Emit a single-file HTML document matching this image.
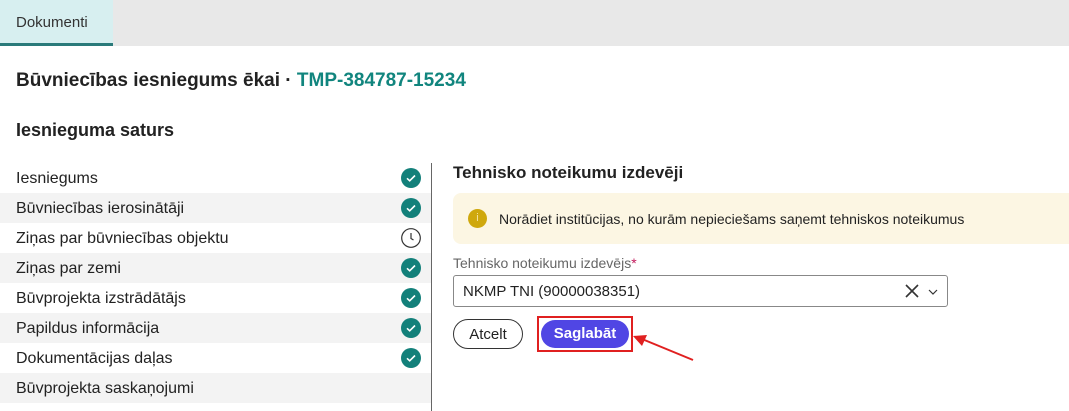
<!DOCTYPE html>
<html><head><meta charset="utf-8"><style>
*{margin:0;padding:0;box-sizing:border-box}
html,body{width:1069px;height:411px;overflow:hidden}
body{background:#fff;font-family:"Liberation Sans",sans-serif;color:#222;position:relative}
.top{position:absolute;left:0;top:0;width:1069px;height:46px;background:#e8e8e8}
.tab{position:absolute;left:0;top:0;width:113px;height:46px;background:#d7eff0;border-bottom:3px solid #2a7a7a;font-size:15px;line-height:46px;padding-left:16px;color:#333}
.h1{position:absolute;left:16px;top:70px;font-size:19px;font-weight:bold;color:#222}
.h1 span{color:#11857e}
.h2{position:absolute;left:16px;top:120px;font-size:18px;font-weight:bold}
.row{position:absolute;left:0;width:432px;height:30px;font-size:16px;line-height:31px;padding-left:16px;color:#222}
.g{background:#f3f3f3}
.ic{position:absolute;left:401px;top:5px;width:20px;height:20px}
.div{position:absolute;left:431px;top:163px;width:1px;height:248px;background:#666}
</style></head><body>
<div class="top"></div><div class="tab">Dokumenti</div>
<div class="h1">Būvniecības iesniegums ēkai · <span>TMP-384787-15234</span></div>
<div class="h2">Iesnieguma saturs</div>
<div class="row" style="top:163px">Iesniegums<svg class="ic" viewBox="0 0 20 20"><circle cx="10" cy="10" r="10" fill="#13807a"/><path d="M6 10.3l2.7 2.5 5.3-5.3" stroke="#fff" stroke-width="1.6" fill="none"/></svg></div>
<div class="row g" style="top:193px">Būvniecības ierosinātāji<svg class="ic" viewBox="0 0 20 20"><circle cx="10" cy="10" r="10" fill="#13807a"/><path d="M6 10.3l2.7 2.5 5.3-5.3" stroke="#fff" stroke-width="1.6" fill="none"/></svg></div>
<div class="row" style="top:223px">Ziņas par būvniecības objektu<svg class="ic" viewBox="0 0 20 20"><circle cx="10" cy="10" r="9.3" fill="#fff" stroke="#333" stroke-width="1.2"/><path d="M10 5v5.5l2.5 1.5" stroke="#333" stroke-width="1.2" fill="none"/></svg></div>
<div class="row g" style="top:253px">Ziņas par zemi<svg class="ic" viewBox="0 0 20 20"><circle cx="10" cy="10" r="10" fill="#13807a"/><path d="M6 10.3l2.7 2.5 5.3-5.3" stroke="#fff" stroke-width="1.6" fill="none"/></svg></div>
<div class="row" style="top:283px">Būvprojekta izstrādātājs<svg class="ic" viewBox="0 0 20 20"><circle cx="10" cy="10" r="10" fill="#13807a"/><path d="M6 10.3l2.7 2.5 5.3-5.3" stroke="#fff" stroke-width="1.6" fill="none"/></svg></div>
<div class="row g" style="top:313px">Papildus informācija<svg class="ic" viewBox="0 0 20 20"><circle cx="10" cy="10" r="10" fill="#13807a"/><path d="M6 10.3l2.7 2.5 5.3-5.3" stroke="#fff" stroke-width="1.6" fill="none"/></svg></div>
<div class="row" style="top:343px">Dokumentācijas daļas<svg class="ic" viewBox="0 0 20 20"><circle cx="10" cy="10" r="10" fill="#13807a"/><path d="M6 10.3l2.7 2.5 5.3-5.3" stroke="#fff" stroke-width="1.6" fill="none"/></svg></div>
<div class="row g" style="top:373px">Būvprojekta saskaņojumi</div>
<div class="row" style="top:403px">Būvprojekta vadība</div>
<div class="div"></div>
<div style="position:absolute;left:453px;top:163px;font-size:17px;font-weight:bold">Tehnisko noteikumu izdevēji</div>
<div style="position:absolute;left:453px;top:193px;width:630px;height:51px;background:#fcf6e3;border-radius:8px"></div>
<div style="position:absolute;left:468px;top:209px;width:19px;height:19px;border-radius:50%;background:#cfa80d;color:#f3e2a0;font-size:11px;text-align:center;line-height:19px">i</div>
<div style="position:absolute;left:499px;top:211px;font-size:14px;color:#222">Norādiet institūcijas, no kurām nepieciešams saņemt tehniskos noteikumus</div>
<div style="position:absolute;left:453px;top:255px;font-size:14px;color:#666">Tehnisko noteikumu izdevējs<span style="color:#c2185b">*</span></div>
<div style="position:absolute;left:453px;top:275px;width:495px;height:32px;border:1px solid #888;border-radius:3px;font-size:15px;line-height:31px;padding-left:9px">NKMP TNI (90000038351)</div>
<svg style="position:absolute;left:903px;top:282px" width="40" height="18" viewBox="0 0 40 18"><path d="M3 3l12 12M15 3L3 15" stroke="#333" stroke-width="1.6"/><path d="M26 8l4 4 4-4" stroke="#333" stroke-width="1.2" fill="none"/></svg>
<div style="position:absolute;left:453px;top:319px;width:70px;height:30px;border:1px solid #333;border-radius:15px;font-size:15px;line-height:29px;text-align:center">Atcelt</div>
<div style="position:absolute;left:537px;top:316px;width:96px;height:36px;border:2px solid #e02020"></div>
<div style="position:absolute;left:541px;top:320px;width:88px;height:28px;background:#5046e4;border-radius:14px;color:#fff;font-size:15px;font-weight:bold;line-height:28px;text-align:center">Saglabāt</div>
<svg style="position:absolute;left:630px;top:330px" width="70" height="35" viewBox="0 0 70 35"><path d="M63 30L12 9" stroke="#e02020" stroke-width="2"/><path d="M3 6l14-1-5 11z" fill="#e02020"/></svg>
</body></html>
